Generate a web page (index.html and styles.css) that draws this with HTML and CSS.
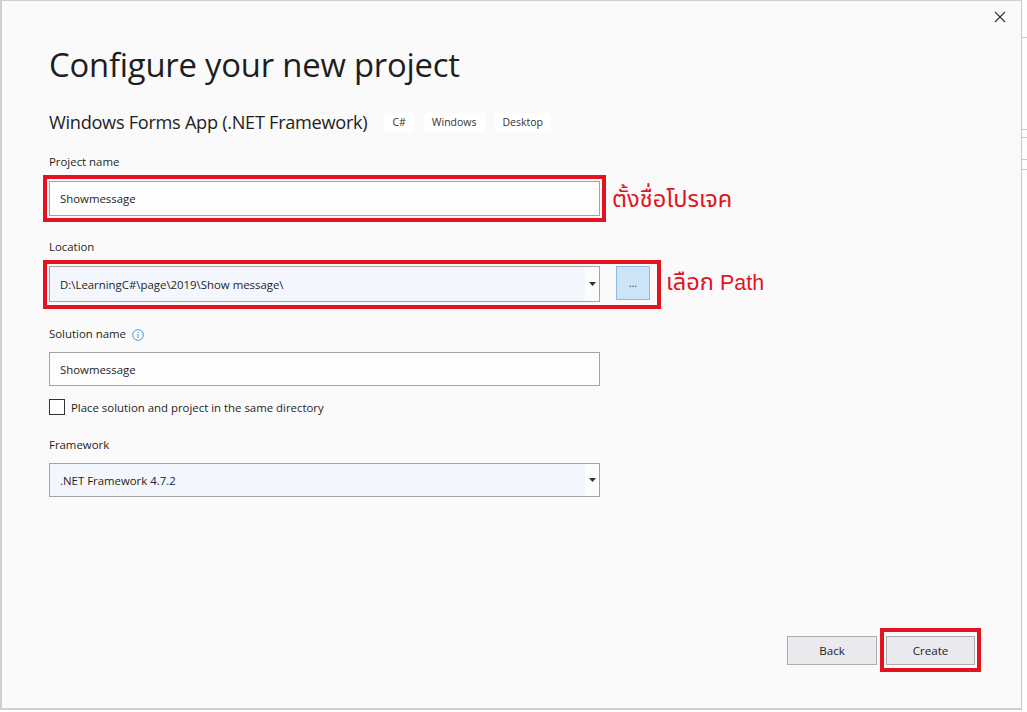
FILE: index.html
```html
<!DOCTYPE html>
<html>
<head>
<meta charset="utf-8">
<link rel="stylesheet" href="styles.css">
</head>
<body>
<div class="screen">
  <div class="window">
    <div class="titlebar">
      <svg class="close" width="12" height="12" viewBox="0 0 12 12"><path d="M1 1 L11 11 M11 1 L1 11" stroke="#333" stroke-width="1.1" fill="none"/></svg>
    </div>
    <div class="content">
      <h1 class="title">Configure your new project</h1>
      <div class="subtitle-row">
        <span class="subtitle">Windows Forms App (.NET Framework)</span>
        <span class="tag">C#</span>
        <span class="tag">Windows</span>
        <span class="tag">Desktop</span>
      </div>

      <div class="label label-project">Project name</div>
      <div class="annot-row">
        <div class="redbox redbox-project">
          <div class="field">Showmessage</div>
        </div>
        <span class="annot annot-project">ตั้งชื่อโปรเจค</span>
      </div>

      <div class="label label-location">Location</div>
      <div class="annot-row">
        <div class="redbox redbox-location">
          <div class="combo">
            <span class="combo-text">D:\LearningC#\page\2019\Show message\</span>
            <span class="combo-arrow"><svg width="7" height="4" viewBox="0 0 7 4"><path d="M0 0 H7 L3.5 4 Z" fill="#333"/></svg></span>
          </div>
          <div class="browse">...</div>
        </div>
        <span class="annot annot-location">เลือก <span class="latin">Path</span></span>
      </div>

      <div class="label label-solution">Solution name
        <svg class="info" width="12" height="12" viewBox="0 0 12 12"><circle cx="6" cy="6" r="5.3" fill="none" stroke="#3a8fd6" stroke-width="0.9"/><rect x="5.5" y="5" width="1" height="4" fill="#3a8fd6"/><rect x="5.5" y="3" width="1" height="1" fill="#3a8fd6"/></svg>
      </div>
      <div class="field field-solution">Showmessage</div>

      <div class="check-row">
        <span class="checkbox"></span>
        <span class="check-label">Place solution and project in the same directory</span>
      </div>

      <div class="label label-framework">Framework</div>
      <div class="combo combo-framework">
        <span class="combo-text">.NET Framework 4.7.2</span>
        <span class="combo-arrow"><svg width="7" height="4" viewBox="0 0 7 4"><path d="M0 0 H7 L3.5 4 Z" fill="#333"/></svg></span>
      </div>

      <div class="footer">
        <button class="btn">Back</button>
        <div class="redbox redbox-create">
          <button class="btn">Create</button>
        </div>
      </div>
    </div>
  </div>
  <div class="side">
    <div class="side-line s1"></div>
    <div class="side-line s2"></div>
    <div class="side-line s3"></div>
    <div class="side-line s4"></div>
    <div class="side-line s5"></div>
  </div>
</div>
</body>
</html>
```

FILE: styles.css
```css
* { box-sizing: border-box; }
html, body { margin: 0; padding: 0; }
body {
  width: 1027px;
  height: 712px;
  background: #ffffff;
  font-family: "Segoe UI", "Open Sans", "Noto Sans", sans-serif;
  color: #1e1e1e;
  overflow: hidden;
}
.screen {
  display: flex;
  width: 1027px;
  height: 712px;
}
.window {
  width: 1022px;
  height: 710px;
  background: #fafafa;
  border-left: 2px solid #cfcfcf;
  border-top: 1px solid #cfcfcf;
  border-right: 1px solid #c8c8c8;
  border-bottom: 2px solid #cfcfcf;
  display: flex;
  flex-direction: column;
}
.titlebar {
  height: 10px;
  display: flex;
  justify-content: flex-end;
  padding-right: 15px;
}
.close {
  margin-top: 10px;
}
.content {
  flex: 1;
  padding-left: 47px;
  display: flex;
  flex-direction: column;
}
.title {
  margin: 34px 0 0 0;
  font-weight: 400;
  font-size: 32.8px;
  line-height: 40px;
  color: #1e1e1e;
  letter-spacing: -0.2px;
}
.subtitle-row {
  display: flex;
  align-items: center;
  margin-top: 27px;
  height: 20px;
}
.subtitle {
  font-size: 18.2px;
  letter-spacing: -0.3px;
  margin-right: 17px;
}
.tag {
  background: #ffffff;
  font-size: 10.5px;
  padding: 2px 8px;
  margin-right: 10px;
  line-height: 15px;
  color: #333;
}
.label {
  font-size: 11.4px;
  line-height: 16px;
  color: #1e1e1e;
  display: flex;
  align-items: center;
}
.label-project { margin-top: 22px; }
.label-location { margin-top: 17px; }
.label-solution { margin-top: 17px; }
.label-framework { margin-top: 22px; }
.info { margin-left: 6px; margin-top: 2px; }
.annot-row {
  display: flex;
  align-items: center;
}
.redbox {
  border: 4px solid #e3141f;
}
.redbox-project {
  margin-left: -6px;
  margin-top: 5px;
  padding: 2px;
}
.redbox-location {
  margin-left: -6px;
  margin-top: 5px;
  padding: 2px 7px 3px 2px;
  display: flex;
  align-items: flex-start;
}
.field {
  width: 551px;
  height: 35px;
  border: 1px solid #a3a3a3;
  background: #fdfdfd;
  font-size: 11.4px;
  padding-left: 10px;
  display: flex;
  align-items: center;
}
.field-solution {
  margin-top: 10px;
  height: 34px;
}
.annot {
  color: #e3141f;
  font-family: "Noto Sans Thai", "Tahoma", "Liberation Sans", sans-serif;
  font-size: 23.6px;
}
.annot-project { margin-left: 6px; margin-top: 8px; }
.annot-location { margin-left: 5px; margin-top: 2px; }
.latin { font-family: "Liberation Sans", sans-serif; font-size: 21.4px; }
.combo {
  width: 551px;
  height: 36px;
  border: 1px solid #a3a3a3;
  background: #f3f6fc;
  font-size: 11.4px;
  display: flex;
  align-items: stretch;
}
.combo-text {
  flex: 1;
  padding-left: 10px;
  display: flex;
  align-items: center;
}
.combo-arrow {
  width: 14px;
  background: #fbfcfe;
  display: flex;
  align-items: center;
  justify-content: center;
}
.combo-framework {
  margin-top: 10px;
  height: 34px;
}
.browse {
  width: 34px;
  height: 34px;
  margin-left: 16px;
  background: #cce4f7;
  border: 1px solid #8dbbe6;
  font-size: 10px;
  display: flex;
  align-items: center;
  justify-content: center;
  color: #333;
}
.check-row {
  display: flex;
  align-items: center;
  margin-top: 13px;
  margin-left: 0;
}
.checkbox {
  width: 16px;
  height: 16px;
  border: 1px solid #333;
  background: #fff;
}
.check-label {
  font-size: 11.4px;
  margin-left: 6px;
}
.footer {
  margin-top: auto;
  margin-bottom: 36px;
  display: flex;
  align-items: center;
  justify-content: flex-end;
  padding-right: 40px;
}
.btn {
  width: 90px;
  height: 29px;
  background: #e9e9ee;
  border: 1px solid #adadad;
  font-family: "Segoe UI", "Open Sans", "Noto Sans", sans-serif;
  font-size: 11.6px;
  color: #1e1e1e;
  padding: 0;
}
.redbox-create {
  margin-left: 3px;
  padding: 4px 2px 3px 2px;
}
.redbox-create .btn { width: 89px; }
.side {
  flex: 1;
  display: flex;
  flex-direction: column;
  background: #fdfdfd;
}
.side-line {
  height: 1px;
  background: #c8c8c8;
}
.s1 { margin-top: 37px; }
.s2 { margin-top: 91px; }
.s3 { margin-top: 7px; }
.s4 { margin-top: 21px; }
.s5 { margin-top: 9px; }
```
